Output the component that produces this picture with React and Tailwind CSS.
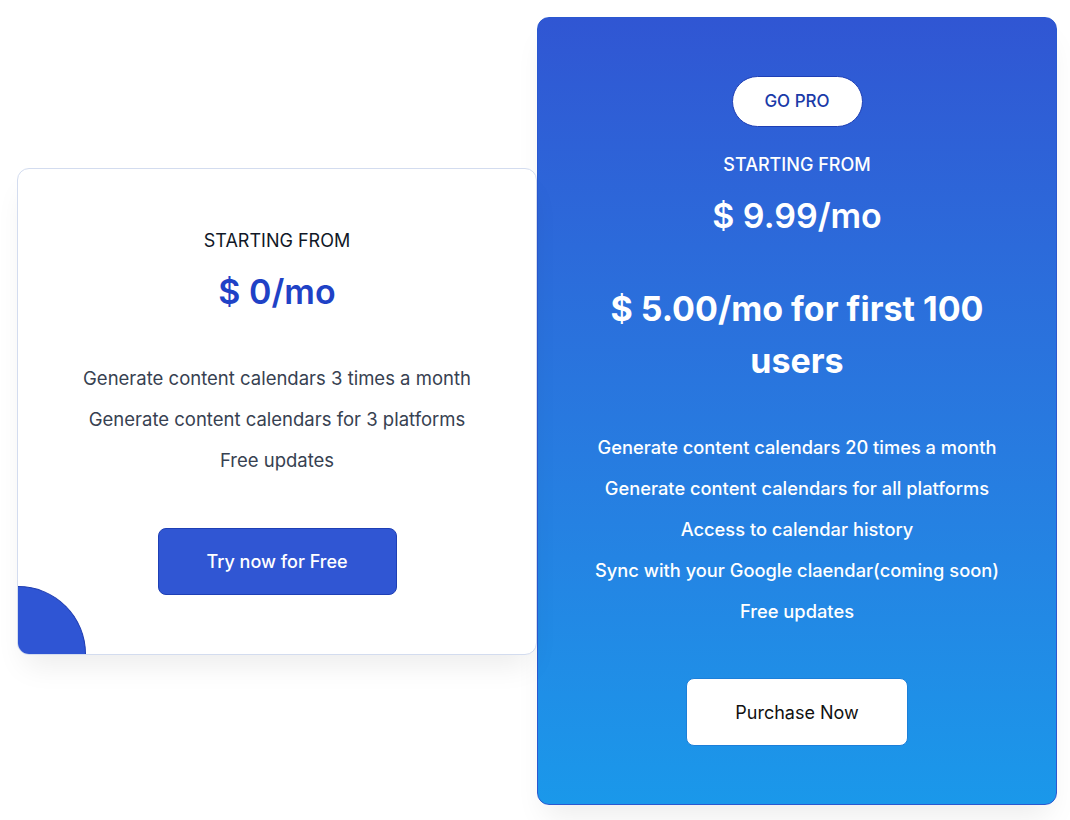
import React from 'react'

const freeFeatures = [
    'Generate content calendars 3 times a month',
    'Generate content calendars for 3 platforms',
    'Free updates'
]

const proFeatures = [
    'Generate content calendars 20 times a month',
    'Generate content calendars for all platforms',
    'Access to calendar history',
    'Sync with your Google claendar(coming soon)',
    'Free updates'
]

const FreeCard = () => (
    <div className="relative w-[520px] shrink-0 overflow-hidden rounded-xl border border-[#d3dcef] bg-white pt-[60px] pb-[59px] text-center shadow-[0_18px_30px_-8px_rgba(0,0,0,0.08)]">
        <p className="text-[18px] leading-6 text-[#111827]">STARTING FROM</p>
        <p className="mt-[19px] text-[34px] font-semibold leading-10 text-[#1f42c6]">$ 0/mo</p>

        <div className="mt-[52px] flex flex-col gap-[13px]">
            {freeFeatures.map((f) => (
                <p key={f} className="text-[18.5px] leading-7 text-[#374151]">{f}</p>
            ))}
        </div>

        <button className="mt-[54px] h-[67px] w-[239px] rounded-lg border border-[#1e3fb5] bg-[#3056d3] text-[18px] font-medium text-white">
            Try now for Free
        </button>

        {/* corner decoration */}
        <div className="absolute bottom-0 left-0 h-[68px] w-[68px] rounded-tr-full border-t border-r border-[#1d3bb0] bg-[#2f55d4]" />
    </div>
)

const ProCard = () => (
    <div className="w-[520px] shrink-0 rounded-xl border border-[#2a58d0] bg-gradient-to-b from-[#3056d3] to-[#1a98ea] px-12 pt-[58px] pb-[58px] text-center text-white shadow-[0_18px_30px_-8px_rgba(0,0,0,0.08)]">
        <div className="flex justify-center">
            <span className="flex h-[51px] w-[131px] items-center justify-center rounded-full border border-[#1e3fb5] bg-white text-[17px] font-medium text-[#1a3aa8]">
                GO PRO
            </span>
        </div>
        <p className="mt-[26px] text-[18px] font-medium leading-6">STARTING FROM</p>
        <p className="mt-[19px] text-[34px] font-semibold leading-10">$ 9.99/mo</p>
        <p className="mx-auto mt-[47px] max-w-[420px] text-[34px] font-bold leading-[52px]">
            $ 5.00/mo for first 100 users
        </p>

        <div className="mt-[46px] flex flex-col gap-[13px]">
            {proFeatures.map((f) => (
                <p key={f} className="text-[18.3px] font-medium leading-7">{f}</p>
            ))}
        </div>

        <button className="mt-[53px] h-[68px] w-[222px] rounded-lg border border-[#1c7fd9] bg-white text-[18px] text-[#111]">
            Purchase Now
        </button>
    </div>
)

export default function App() {
    return (
        <div className="min-h-[820px] bg-white pt-[17px] pl-[17px]" style={{ fontFamily: 'Inter, "Noto Sans", sans-serif' }}>
            <div className="flex items-center">
                <FreeCard />
                <ProCard />
            </div>
        </div>
    )
}
